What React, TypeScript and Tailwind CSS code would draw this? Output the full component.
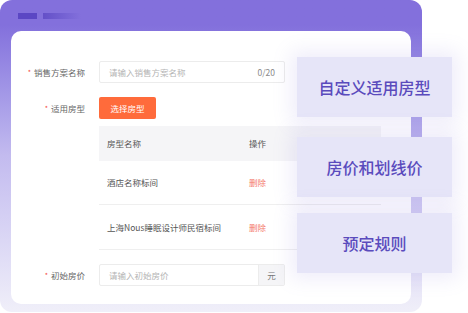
import React from "react";

const font = { fontFamily: '"Noto Sans CJK SC", "Noto Sans", sans-serif' };

const features = [
  { label: "自定义适用房型", top: "top-[57px]" },
  { label: "房价和划线价", top: "top-[137px]" },
  { label: "预定规则", top: "top-[213px]" },
];

function Label({ text }: { text: string }) {
  return (
    <div className="w-[74px] shrink-0 flex items-center justify-end gap-[3px] text-[8.5px] text-[#666]">
      <span className="text-[#f5483b] text-[7px] leading-none">*</span>
      <span>{text}</span>
    </div>
  );
}

export default function App() {
  return (
    <div className="relative w-[468px] h-[313px] bg-white overflow-hidden" style={font}>
      <div className="w-[422px] h-[312px] rounded-[12px] bg-gradient-to-b from-[#8370dc] from-[8%] via-[#c3bbef] via-[50%] to-[#f0eff9] pt-[13px]">
        <div className="flex items-center gap-[6px] pl-[18px] h-[6px]">
          <div className="w-[19px] h-[6px] bg-[#5b47c4]" />
          <div className="w-[38px] h-[6px] bg-gradient-to-r from-[#6450c8] to-[#8370dc]" />
        </div>

        <div className="ml-[11px] mt-[12px] w-[400px] h-[273px] rounded-[10px] bg-white pt-[30px]">
          <div className="flex items-center gap-[14px] h-[22px]">
            <Label text="销售方案名称" />
            <div className="w-[186px] h-[22px] border border-[#ececec] rounded-[2px] flex items-center justify-between px-[9px] text-[8.5px]">
              <span className="text-[#b4b4b4]">请输入销售方案名称</span>
              <span className="text-[#8a8a8a]">0/20</span>
            </div>
          </div>

          <div className="flex items-center gap-[14px] h-[22px] mt-[14px]">
            <Label text="适用房型" />
            <div className="w-[57px] h-[22px] rounded-[2px] bg-[#ff6b3b] text-white text-[8.5px] flex items-center justify-center">
              选择房型
            </div>
          </div>

          <div className="ml-[88px] mt-[7px] w-[282px] text-[8.5px] text-[#555]">
            <div className="h-[35px] bg-[#f5f5f7] flex items-center">
              <span className="w-[150px] pl-[8px]">房型名称</span>
              <span>操作</span>
            </div>
            <div className="h-[44px] border-b border-[#efefef] flex items-center">
              <span className="w-[150px] pl-[8px]">酒店名称标间</span>
              <span className="text-[#f47b6b]">删除</span>
            </div>
            <div className="h-[45px] border-b border-[#efefef] flex items-center">
              <span className="w-[150px] pl-[8px]">上海Nous睡眠设计师民宿标间</span>
              <span className="text-[#f47b6b]">删除</span>
            </div>
          </div>

          <div className="flex items-center gap-[14px] h-[22px] mt-[14px]">
            <Label text="初始房价" />
            <div className="w-[186px] h-[22px] border border-[#ececec] rounded-[2px] flex items-center text-[8.5px]">
              <span className="flex-1 pl-[9px] text-[#b4b4b4]">请输入初始房价</span>
              <span className="w-[26px] h-full bg-[#f5f5f7] border-l border-[#ececec] flex items-center justify-center text-[#777]">
                元
              </span>
            </div>
          </div>
        </div>
      </div>

      {features.map((f) => (
        <div
          key={f.label}
          className={`absolute left-[297px] ${f.top} w-[155px] h-[60px] bg-[#e6e5f8] flex items-center justify-center text-[16px] font-medium text-[#5a4bbd] shadow-[0_0_18px_6px_rgba(140,125,220,0.14)]`}
        >
          {f.label}
        </div>
      ))}
    </div>
  );
}
